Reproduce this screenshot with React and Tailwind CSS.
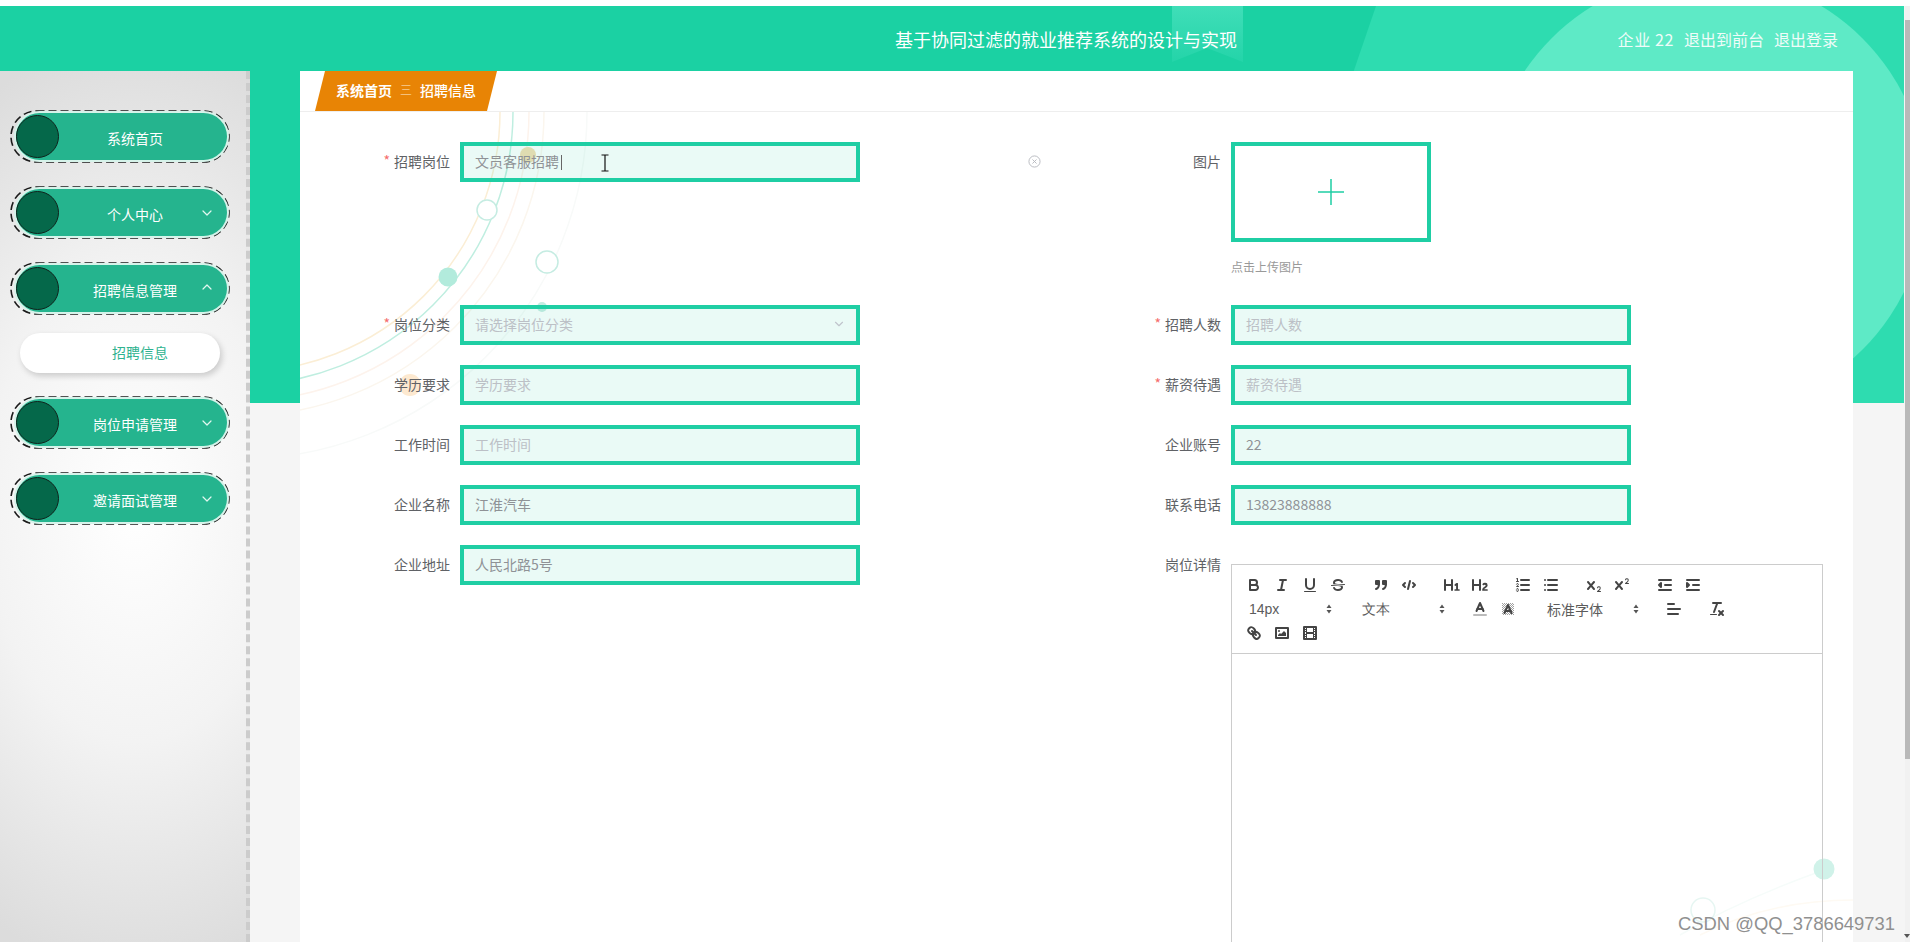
import React from "react";
import { ChevronDown, ChevronUp } from "lucide-react";

const CJK = "font-['Noto_Sans_CJK_SC','Liberation_Sans',sans-serif]";

// Quill-style toolbar glyphs, 18x18 grid
const S = { fill: "none", stroke: "#444", strokeWidth: 2, strokeLinecap: "round", strokeLinejoin: "round" };
const T = { fill: "none", stroke: "#444", strokeWidth: 1, strokeLinecap: "round" };
const F = { fill: "#444" };

const glyphs = {
  bold: (<><path {...S} d="M5,4H9.5A2.5,2.5,0,0,1,12,6.5v0A2.5,2.5,0,0,1,9.5,9H5A0,0,0,0,1,5,9V4A0,0,0,0,1,5,4Z" /><path {...S} d="M5,9h5.5A2.5,2.5,0,0,1,13,11.5v0A2.5,2.5,0,0,1,10.5,14H5a0,0,0,0,1,0,0V9A0,0,0,0,1,5,9Z" /></>),
  italic: (<><line {...S} x1="7" x2="13" y1="4" y2="4" /><line {...S} x1="5" x2="11" y1="14" y2="14" /><line {...S} x1="8" x2="10" y1="14" y2="4" /></>),
  underline: (<><path {...S} d="M5,3V9a4.012,4.012,0,0,0,4,4H9a4.012,4.012,0,0,0,4-4V3" /><rect {...F} height="1" rx=".5" ry=".5" width="12" x="3" y="15" /></>),
  strike: (<><line {...T} x1="15.5" x2="2.5" y1="8.5" y2="9.5" /><path {...F} d="M9.007,8C6.542,7.791,6,7.519,6,6.5,6,5.792,7.283,5,9,5c1.571,0,2.765.679,2.969,1.309a1,1,0,0,0,1.9-.617C13.356,4.106,11.354,3,9,3,6.2,3,4,4.538,4,6.5a3.2,3.2,0,0,0,.5,1.843Z" /><path {...F} d="M8.984,10C11.457,10.208,12,10.479,12,11.5c0,.708-1.283,1.5-3,1.5-1.571,0-2.765-.679-2.969-1.309a1,1,0,1,0-1.9.617C4.644,13.894,6.646,15,9,15c2.8,0,5-1.538,5-3.5a3.2,3.2,0,0,0-.5-1.843Z" /></>),
  quote: (<><rect {...S} fill="#444" height="3" width="3" x="4" y="5" /><rect {...S} fill="#444" height="3" width="3" x="11" y="5" /><path {...S} d="M7,8c0,4.031-3,5-3,5" /><path {...S} d="M14,8c0,4.031-3,5-3,5" /></>),
  code: (<><polyline {...S} points="5 7 3 9 5 11" /><polyline {...S} points="13 7 15 9 13 11" /><line {...S} x1="10" x2="8" y1="5" y2="13" /></>),
  h1: (<path {...F} d="M10,4V14a1,1,0,0,1-2,0V10H3v4a1,1,0,0,1-2,0V4A1,1,0,0,1,3,4V8H8V4a1,1,0,0,1,2,0Zm6.06787,9.209H14.98975V7.59863a.54085.54085,0,0,0-.605-.60547h-.62744a1.01119,1.01119,0,0,0-.748.29688L11.645,8.56641a.5435.5435,0,0,0-.022.8584l.28613.30762a.53861.53861,0,0,0,.84717.0332l.09912-.08789a1.2137,1.2137,0,0,0,.2417-.35254h.02246s-.01123.30859-.01123.60547V13.209H12.041a.54085.54085,0,0,0-.605.60547v.43945a.54085.54085,0,0,0,.605.60547h4.02686a.54085.54085,0,0,0,.605-.60547v-.43945A.54085.54085,0,0,0,16.06787,13.209Z" />),
  h2: (<path {...F} d="M16.73975,13.81445v.43945a.54085.54085,0,0,1-.605.60547H11.855a.58392.58392,0,0,1-.64893-.60547V14.0127c0-2.90527,3.39941-3.42187,3.39941-4.55469a.77675.77675,0,0,0-.84717-.78125,1.17684,1.17684,0,0,0-.83594.38477c-.2749.26367-.561.374-.85791.13184l-.4292-.34082c-.30811-.24219-.38525-.51758-.1543-.81445a2.97155,2.97155,0,0,1,2.45361-1.17676,2.45393,2.45393,0,0,1,2.68408,2.40918c0,2.45312-3.1792,2.92676-3.27832,3.93848h2.79443A.54085.54085,0,0,1,16.73975,13.81445ZM9,3A.99974.99974,0,0,0,8,4V8H3V4A1,1,0,0,0,1,4V14a1,1,0,0,0,2,0V10H8v4a1,1,0,0,0,2,0V4A.99974.99974,0,0,0,9,3Z" />),
  ol: (<><line {...S} x1="7" x2="15" y1="4" y2="4" /><line {...S} x1="7" x2="15" y1="9" y2="9" /><line {...S} x1="7" x2="15" y1="14" y2="14" /><line {...T} x1="2.5" x2="4.5" y1="5.5" y2="5.5" /><path {...F} d="M3.5,6A0.5,0.5,0,0,1,3,5.5V3.085l-0.276.138A0.5,0.5,0,0,1,2.053,3c-0.124-.247-0.023-0.324.224-0.447l1-.5A0.5,0.5,0,0,1,4,2.5v3A0.5,0.5,0,0,1,3.5,6Z" /><path {...T} d="M4.5,10.5h-2c0-.234,1.85-1.076,1.85-2.234A0.959,0.959,0,0,0,2.5,8.156" /><path {...T} d="M2.5,14.846a0.959,0.959,0,0,0,1.85-.109A0.7,0.7,0,0,0,3.75,14a0.688,0.688,0,0,0,.6-0.736,0.959,0.959,0,0,0-1.85-.109" /></>),
  ul: (<><line {...S} x1="6" x2="15" y1="4" y2="4" /><line {...S} x1="6" x2="15" y1="9" y2="9" /><line {...S} x1="6" x2="15" y1="14" y2="14" /><line {...S} x1="3" x2="3" y1="4" y2="4" /><line {...S} x1="3" x2="3" y1="9" y2="9" /><line {...S} x1="3" x2="3" y1="14" y2="14" /></>),
  sub: (<><path {...F} d="M15.5,15H13.861a3.858,3.858,0,0,0,1.914-2.975,1.8,1.8,0,0,0-1.6-1.751A1.921,1.921,0,0,0,12.021,11.7a0.50013,0.50013,0,1,0,.957.291h0a0.914,0.914,0,0,1,1.053-.725,0.81,0.81,0,0,1,.744.762c0,1.076-1.16971,1.86982-1.93971,2.43082A1.45639,1.45639,0,0,0,12,15.5a0.5,0.5,0,0,0,.5.5h3A0.5,0.5,0,0,0,15.5,15Z" /><path {...F} d="M9.65,5.241a1,1,0,0,0-1.409.108L6,7.964,3.759,5.349A1,1,0,0,0,2.192,6.59178Q2.21541,6.6213,2.241,6.649L4.684,9.5,2.241,12.35A1,1,0,0,0,3.71,13.70722q0.02557-.02768.049-0.05722L6,11.036,8.241,13.65a1,1,0,1,0,1.567-1.24277Q9.78459,12.3777,9.759,12.35L7.316,9.5,9.759,6.651A1,1,0,0,0,9.65,5.241Z" /></>),
  sup: (<><path {...F} d="M15.5,7H13.861a4.015,4.015,0,0,0,1.914-2.975,1.8,1.8,0,0,0-1.6-1.751A1.922,1.922,0,0,0,12.021,3.7a0.5,0.5,0,1,0,.957.291,0.917,0.917,0,0,1,1.053-.725,0.81,0.81,0,0,1,.744.762c0,1.077-1.164,1.925-1.934,2.486A1.423,1.423,0,0,0,12,7.5a0.5,0.5,0,0,0,.5.5h3A0.5,0.5,0,0,0,15.5,7Z" /><path {...F} d="M9.651,5.241a1,1,0,0,0-1.41.108L6,7.964,3.759,5.349a1,1,0,1,0-1.519,1.3L4.683,9.5,2.241,12.35a1,1,0,1,0,1.519,1.3L6,11.036,8.241,13.65a1,1,0,0,0,1.519-1.3L7.317,9.5,9.759,6.651A1,1,0,0,0,9.651,5.241Z" /></>),
  outdent: (<><line {...S} x1="3" x2="15" y1="14" y2="14" /><line {...S} x1="3" x2="15" y1="4" y2="4" /><line {...S} x1="9" x2="15" y1="9" y2="9" /><polyline {...S} fill="#444" points="5 7 5 11 3 9 5 7" /></>),
  indent: (<><line {...S} x1="3" x2="15" y1="14" y2="14" /><line {...S} x1="3" x2="15" y1="4" y2="4" /><line {...S} x1="9" x2="15" y1="9" y2="9" /><polyline {...S} fill="#444" points="3 7 3 11 5 9 3 7" /></>),
  color: (<><line {...S} stroke="#bbb" x1="3" x2="15" y1="15" y2="15" /><polyline {...S} points="5.5 11 9 3 12.5 11" /><line {...S} x1="11.63" x2="6.38" y1="9" y2="9" /></>),
  background: (<><defs><pattern id="hatch" width="2" height="2" patternUnits="userSpaceOnUse"><rect width="1" height="1" fill="#a0a0a0" /><rect x="1" y="1" width="1" height="1" fill="#a0a0a0" /></pattern></defs><rect x="3" y="3" width="12" height="12" fill="url(#hatch)" /><polyline {...S} points="5.5 13 9 5 12.5 13" /><line {...S} x1="11.63" x2="6.38" y1="11" y2="11" /></>),
  align: (<><line {...S} x1="3" x2="15" y1="9" y2="9" /><line {...S} x1="3" x2="13" y1="14" y2="14" /><line {...S} x1="3" x2="9" y1="4" y2="4" /></>),
  clean: (<><line {...S} x1="5" x2="13" y1="3" y2="3" /><line {...S} x1="6" x2="9.35" y1="12" y2="3" /><line {...S} x1="11" x2="15" y1="11" y2="15" /><line {...S} x1="15" x2="11" y1="11" y2="15" /><rect {...F} height="1" rx=".5" ry=".5" width="7" x="2" y="14" /></>),
  link: (<><line {...S} x1="7" x2="11" y1="7" y2="11" /><path {...S} d="M8.9,4.577a3.476,3.476,0,0,1,.36,4.679A3.476,3.476,0,0,1,4.577,8.9C3.185,7.5,2.035,6.4,4.217,4.217S7.5,3.185,8.9,4.577Z" /><path {...S} d="M13.423,9.1a3.476,3.476,0,0,0-4.679-.36,3.476,3.476,0,0,0,.36,4.679c1.392,1.392,2.5,2.542,4.679.36S14.815,10.5,13.423,9.1Z" /></>),
  image: (<><rect {...S} height="10" width="12" x="3" y="4" /><circle {...F} cx="6" cy="7" r="1" /><polyline {...F} points="5 12 5 11 7 9 8 10 11 7 13 9 13 12 5 12" /></>),
  video: (<><rect {...S} height="12" width="12" x="3" y="3" /><rect {...F} height="12" width="1" x="5" y="3" /><rect {...F} height="12" width="1" x="12" y="3" /><rect {...F} height="2" width="8" x="5" y="8" /><rect {...F} height="1" width="3" x="3" y="5" /><rect {...F} height="1" width="3" x="3" y="7" /><rect {...F} height="1" width="3" x="3" y="10" /><rect {...F} height="1" width="3" x="3" y="12" /><rect {...F} height="1" width="3" x="12" y="5" /><rect {...F} height="1" width="3" x="12" y="7" /><rect {...F} height="1" width="3" x="12" y="10" /><rect {...F} height="1" width="3" x="12" y="12" /></>),
};

function Tool({ name }) {
  return (
    <span className="w-7 h-6 px-[5px] py-[3px] inline-block">
      <svg viewBox="0 0 18 18" className="w-[18px] h-[18px] block">{glyphs[name]}</svg>
    </span>
  );
}

function Group({ names }) {
  return (
    <span className="flex mr-[15px]">
      {names.map((n) => <Tool key={n} name={n} />)}
    </span>
  );
}

function Picker({ label, width }) {
  return (
    <span className={`flex items-center justify-between h-6 mr-[15px] text-sm text-[#5c5c5c] ${width}`}>
      <span>{label}</span>
      <svg viewBox="0 0 18 18" className="w-[18px] h-[18px]">
        <polygon fill="#555" points="6.5 10 9 13.5 11.5 10" />
        <polygon fill="#555" points="6.5 8 9 4.5 11.5 8" />
      </svg>
    </span>
  );
}

function NavItem({ label, arrow }) {
  return (
    <div className="relative w-[220px] h-[53px] ml-[10px] p-[3px] pl-[6px] pr-[3px]">
      {/* Stitched outline round the pill */}
      <svg className="absolute left-0 top-0" width="220" height="53" fill="none">
        <rect x="1" y="1" width="218" height="51" rx="25.5" stroke="#1c1c1c" strokeWidth="1.6" strokeDasharray="8 4" />
      </svg>
      <div className="relative h-[47px] rounded-full bg-[#25b48e] ring-2 ring-[#d6f3ea] flex items-center text-white text-sm">
        <span className="w-[43px] h-[43px] rounded-full bg-[#05684a] border border-[#10231c] shrink-0" />
        <span className="absolute left-[27px] right-0 top-[14px] text-center leading-[22px]">{label}</span>
        {arrow === "down" && <ChevronDown className="absolute right-[12px] top-[16px] text-[#e2f7f0]" size={16} strokeWidth={1.8} />}
        {arrow === "up" && <ChevronUp className="absolute right-[12px] top-[14px] text-[#e2f7f0]" size={16} strokeWidth={1.8} />}
      </div>
    </div>
  );
}

function Field({ label, required, value, placeholder, select }) {
  return (
    <div className="flex h-10 items-center">
      <label className="w-[150px] pb-[2px] text-right text-sm text-[#606266]">
        {required && <span className="text-[#f56c6c] mr-1 relative -top-[1px]">*</span>}
        {label}
      </label>
      <div className="ml-[10px] w-[400px] h-10 border-4 border-[#1fcea4] bg-[rgba(25,195,155,0.09)] flex items-center justify-between pl-[11px] pr-[10px] pb-[2px] text-sm">
        <span className={value ? "text-[#8f9296]" : "text-[#bcc0c6]"}>{value || placeholder}</span>
        {select && <ChevronDown size={14} className="text-[#c0c4cc]" />}
      </div>
    </div>
  );
}

export default function App() {
  return (
    <div className={`relative w-[1910px] h-[942px] overflow-hidden bg-[#f5f5f5] ${CJK}`}>
      {/* Teal backdrop behind the header and the top of the content area */}
      <svg className="absolute left-0 top-[6px]" width="1904" height="397" viewBox="0 0 1904 397">
        <defs>
          <linearGradient id="ribbon" x1="0" y1="0" x2="0" y2="1">
            <stop offset="0" stopColor="#40deb8" />
            <stop offset="1" stopColor="#24d4a9" />
          </linearGradient>
        </defs>
        <rect width="1904" height="397" fill="#1bd1a3" />
        <polygon points="1376,0 1904,0 1904,397 1240,397" fill="#2edcb0" />
        <circle cx="1707" cy="188" r="220" fill="#5eeac6" />
        <polygon points="1172,0 1243,0 1243,56 1207,42 1172,56" fill="url(#ribbon)" />
      </svg>

      <div className="relative h-[6px] bg-white" />

      <header className="relative h-[65px] flex items-center text-white">
        <h1 className="absolute left-[895px] top-[20px] text-lg leading-[26px] font-normal">基于协同过滤的就业推荐系统的设计与实现</h1>
        <div className="ml-auto mr-[72px] flex gap-[10px] text-base opacity-90">
          <span className="tracking-[0.6px]">企业 22</span>
          <span>退出到前台</span>
          <span>退出登录</span>
        </div>
      </header>

      <div className="relative flex h-[871px]">
        <aside className="w-[250px] h-full pt-[39px] border-r-4 border-dashed border-[#cccccc] bg-[radial-gradient(ellipse_300px_470px_at_55%_50%,#ffffff_0%,#f3f3f3_50%,#dcdcdc_100%)] flex flex-col shrink-0">
          <NavItem label="系统首页" />
          <div className="h-[23px]" />
          <NavItem label="个人中心" arrow="down" />
          <div className="h-[23px]" />
          <NavItem label="招聘信息管理" arrow="up" />
          <div className="ml-[20px] mt-[18px] w-[200px] h-10 pb-[2px] rounded-full bg-white shadow-[2px_3px_6px_rgba(0,0,0,0.18)] flex items-center justify-center text-sm text-[#2fb390]">
            <span className="relative left-[20px]">招聘信息</span>
          </div>
          <div className="h-[23px]" />
          <NavItem label="岗位申请管理" arrow="down" />
          <div className="h-[23px]" />
          <NavItem label="邀请面试管理" arrow="down" />
        </aside>

        <main className="relative ml-[50px] w-[1553px] h-full bg-white overflow-hidden">
          {/* Faint orbit artwork printed on the panel */}
          <svg className="absolute left-0 top-[40px]" width="1553" height="831" viewBox="300 111 1553 831">
            <g fill="none" strokeWidth="1.5">
              <circle cx="240" cy="112" r="260" stroke="#fbeed5" />
              <circle cx="240" cy="112" r="273" stroke="#bfeee0" />
              <circle cx="240" cy="112" r="289" stroke="#fdf3ec" />
              <circle cx="240" cy="112" r="304" stroke="#fbf6ee" />
              <circle cx="240" cy="112" r="347" stroke="#f8faf9" />
              <circle cx="487" cy="210" r="10" stroke="#c5ece2" fill="#fff" />
              <circle cx="547" cy="262" r="11" stroke="#c5ece2" fill="#fff" />
              <path d="M1680 935 Q1740 900 1824 870" stroke="#f6fcfa" />
              <path d="M1700 935 Q1770 900 1853 900" stroke="#fefaf3" />
              <circle cx="1703" cy="910" r="12" stroke="#e6f6f2" fill="#fff" />
            </g>
            <circle cx="448" cy="277" r="9.5" fill="#b2ebdc" />
            <circle cx="542" cy="307" r="5" fill="#c5ece2" />
            <circle cx="528" cy="155" r="8" fill="#f3dfb4" />
            <circle cx="410" cy="385" r="11" fill="#fde9d0" />
            <circle cx="1824" cy="869" r="10.5" fill="#d0f2e9" />
          </svg>

          <div className="relative h-[41px] border-b border-[#eeeeee]">
            <div className="ml-[15px] w-[182px] h-10 bg-[#e88405] [clip-path:polygon(10px_0,100%_0,172px_100%,0_100%)] flex items-center pl-[21px] pb-[2px] text-sm font-bold text-white">
              <span>系统首页</span>
              <span className="w-[28px] text-center text-xs font-light text-[#fdeacc]">三</span>
              <span className="font-medium">招聘信息</span>
            </div>
          </div>

          <form className="relative pt-[30px] grid grid-cols-[771px_1fr] gap-y-5">
            <div className="h-[143px] relative">
              <Field label="招聘岗位" required value="文员客服招聘" />
              {/* Caret and I-beam pointer in the focused field */}
              <span className="absolute left-[261px] top-[13px] w-px h-[15px] bg-[#666]" />
              <svg className="absolute left-[300px] top-[12px]" width="10" height="18" viewBox="0 0 10 18" fill="none" stroke="#111" strokeWidth="1.2">
                <path d="M1.5 1h7M1.5 17h7M5 1v16" />
              </svg>
              <svg className="absolute left-[728px] top-[13px]" width="13" height="13" viewBox="0 0 14 14" fill="none" stroke="#b5b8be" strokeWidth="1">
                <circle cx="7" cy="7" r="6" />
                <path d="M4.8 4.8l4.4 4.4M9.2 4.8l-4.4 4.4" />
              </svg>
            </div>
            <div className="flex">
              <label className="w-[150px] text-right text-sm text-[#606266] leading-[38px]">图片</label>
              <div className="ml-[10px]">
                <div className="w-[200px] h-[100px] border-4 border-[#1fcea4] flex items-center justify-center">
                  <svg width="30" height="30" viewBox="0 0 30 30" stroke="#1fcea4" strokeWidth="1.5">
                    <path d="M15 2v26M2 15h26" />
                  </svg>
                </div>
                <p className="mt-[17px] text-xs text-[#999]">点击上传图片</p>
              </div>
            </div>

            <Field label="岗位分类" required placeholder="请选择岗位分类" select />
            <Field label="招聘人数" required placeholder="招聘人数" />
            <Field label="学历要求" placeholder="学历要求" />
            <Field label="薪资待遇" required placeholder="薪资待遇" />
            <Field label="工作时间" placeholder="工作时间" />
            <Field label="企业账号" value="22" />
            <Field label="企业名称" value="江淮汽车" />
            <Field label="联系电话" value="13823888888" />
            <Field label="企业地址" value="人民北路5号" />

            <div className="flex">
              <label className="w-[150px] text-right text-sm text-[#606266] leading-[38px]">岗位详情</label>
              <div className="ml-[10px] mt-[19px] w-[592px] h-[500px] border border-[#cccccc] font-['Liberation_Sans',sans-serif]">
                <div className="h-[89px] border-b border-[#cccccc] p-2 flex flex-col">
                  <div className="flex">
                    <Group names={["bold", "italic", "underline", "strike"]} />
                    <Group names={["quote", "code"]} />
                    <Group names={["h1", "h2"]} />
                    <Group names={["ol", "ul"]} />
                    <Group names={["sub", "sup"]} />
                    <Group names={["outdent", "indent"]} />
                  </div>
                  <div className="flex">
                    <Picker label="14px" width="w-[98px] pl-[9px]" />
                    <Picker label="文本" width="w-[98px] pl-[9px]" />
                    <Group names={["color", "background"]} />
                    <span className="font-['Noto_Sans_CJK_SC',sans-serif]"><Picker label="标准字体" width="w-[108px] pl-[10px]" /></span>
                    <Group names={["align"]} />
                    <Group names={["clean"]} />
                  </div>
                  <div className="flex">
                    <Group names={["link", "image", "video"]} />
                  </div>
                </div>
              </div>
            </div>
          </form>
        </main>
      </div>

      {/* Page scrollbar */}
      <div className="absolute right-0 top-[6px] w-[5px] h-[936px] bg-[#f1f1f1] pt-[14px]">
        <div className="h-[739px] bg-[#b9b9b9]" />
      </div>
      <svg className="absolute right-0 bottom-[4px]" width="6" height="4" viewBox="0 0 6 4">
        <polygon points="0,0 6,0 3,4" fill="#555" />
      </svg>

      {/* Image watermark */}
      <span className="absolute left-[1678px] top-[912px] text-[18.4px] leading-6 text-[#909090] font-['Liberation_Sans',sans-serif]">CSDN @QQ_3786649731</span>
    </div>
  );
}
